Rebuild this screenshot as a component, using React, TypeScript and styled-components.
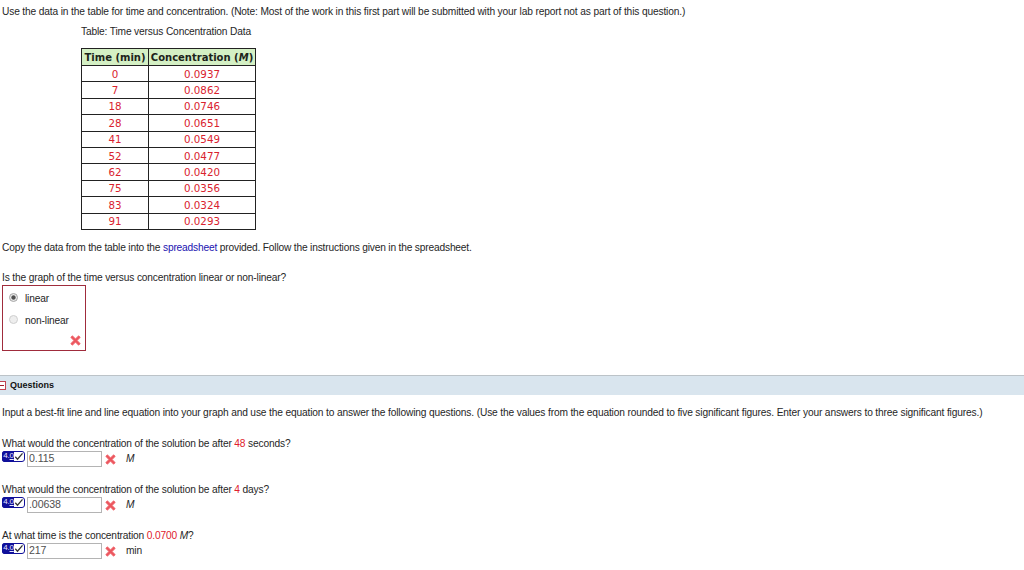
import React from "react";
import styled, { createGlobalStyle } from "styled-components";

const GlobalStyle = createGlobalStyle`
  body {
    margin: 0;
    background: #fff;
    color: #262626;
    font-family: "Liberation Sans", Arial, sans-serif;
    font-size: 10.2px;
    line-height: 16px;
    letter-spacing: -0.15px;
    overflow: hidden;
  }
`;

const Page = styled.div`
  width: 1024px;
  height: 570px;
  padding-top: 4px;
  box-sizing: border-box;
  overflow: hidden;
`;

const Text = styled.p<{ $top?: number; $spacing?: number }>`
  margin: ${(props) => props.$top || 0}px 0 0 2px;
  height: 14px;
  white-space: nowrap;
  letter-spacing: ${(props) => props.$spacing || -0.155}px;
`;

const Random = styled.span`
  color: #e0202c;
`;

const Link = styled.a`
  color: #1a12b0;
`;

const DataBlock = styled.div`
  margin: 6px 0 0 81px;
`;

const Caption = styled.div`
  height: 14px;
  margin-bottom: 10px;
  white-space: nowrap;
`;

const DataGrid = styled.div`
  display: grid;
  grid-template-columns: 66px 106px;
  grid-template-rows: 16px repeat(10, 15.4px);
  gap: 1px;
  width: 173px;
  padding: 1px;
  background: #222;
  font-family: "DejaVu Sans", Verdana, sans-serif;
  line-height: 14px;
  letter-spacing: 0;
`;

const HeadCell = styled.div`
  display: flex;
  align-items: center;
  justify-content: center;
  padding-top: 1px;
  background: #d4f0c4;
  color: #1c241a;
  font-size: 10px;
  font-weight: bold;
  white-space: pre;
`;

const Cell = styled.div`
  display: flex;
  align-items: center;
  justify-content: center;
  background: #fff;
  color: #d9222e;
  font-size: 10.3px;
`;

const ChoiceBox = styled.div`
  display: flex;
  flex-direction: column;
  box-sizing: border-box;
  width: 84px;
  height: 66px;
  margin: 1px 0 0 2px;
  padding: 5px 4px 4px 6px;
  border: 1px solid #a02c3c;
`;

const Choice = styled.label`
  display: flex;
  height: 14px;
  margin-bottom: 8px;
`;

const Radio = styled.span<{ $checked?: boolean }>`
  box-sizing: border-box;
  width: 9px;
  height: 9px;
  margin: 2px 7px 0 0;
  border: 1px solid ${(props) => (props.$checked ? "#a4a4a4" : "#cfcfcf")};
  border-radius: 50%;
  background: ${(props) =>
    props.$checked ? "radial-gradient(circle, #505050 0 1.7px, #e8e8e8 2.6px)" : "#eee"};
`;

const ChoiceMark = styled.div`
  display: flex;
  justify-content: flex-end;
`;

const SectionBar = styled.div`
  display: flex;
  align-items: center;
  box-sizing: border-box;
  height: 20px;
  margin-top: 24px;
  border-top: 1px solid #bcc3c8;
  background: #d9e5ee;
  color: #111;
  font-size: 9px;
  font-weight: bold;
  line-height: 14px;
  letter-spacing: 0;
`;

const Collapse = styled.span`
  display: flex;
  align-items: center;
  justify-content: center;
  box-sizing: border-box;
  width: 8px;
  height: 9px;
  margin: 0 4px 0 -2px;
  border: 1px solid #c04452;
  background: #fff;

  &::after {
    content: "";
    width: 4px;
    height: 1px;
    background: #a01c2c;
  }
`;

const AnswerRow = styled.div`
  display: flex;
  height: 17px;
  padding-left: 2px;
`;

const Sigfig = styled.span`
  display: flex;
  box-sizing: border-box;
  width: 23px;
  height: 11px;
  margin: 1px 2px 0 0;
  border: 1px solid #10109a;
  border-radius: 2px 3px 3px 2px;
  background: #fff;
`;

const SigfigDigits = styled.span`
  flex: none;
  width: 11px;
  background: #10109a;
  color: #e8e8ff;
  font-size: 8px;
  line-height: 8px;
  letter-spacing: -0.2px;
  text-align: center;
  white-space: nowrap;
`;

const AnswerField = styled.input`
  box-sizing: border-box;
  width: 75px;
  height: 16px;
  margin: 1px 0 0;
  padding: 0 1px 2px;
  border: 1px solid #b4b4b4;
  background: #fff;
  color: #505050;
  font: 10.6px "Liberation Sans", Arial, sans-serif;
  letter-spacing: -0.1px;
  outline: none;
`;

const AnswerMark = styled.span`
  display: flex;
  margin: 4px 10px 0 3px;
`;

const Unit = styled.span`
  padding-top: 1px;
`;

const Wrong = () => (
  <svg width="11" height="11" viewBox="0 0 11 11">
    <path d="M1.4 1.4 9.6 9.6M9.6 1.4 1.4 9.6" stroke="#f47c82" strokeWidth="3.2" />
    <path d="M1.5 1.5 9.5 9.5M9.5 1.5 1.5 9.5" stroke="#ea545c" strokeWidth="1.7" />
  </svg>
);

const Check = () => (
  <svg width="10" height="9" viewBox="0 0 10 9">
    <path d="M1.3 4.8 3.5 7.2 8.5 1.3" fill="none" stroke="#333" strokeWidth="1.3" />
  </svg>
);

const rows = [
  ["0", "0.0937"],
  ["7", "0.0862"],
  ["18", "0.0746"],
  ["28", "0.0651"],
  ["41", "0.0549"],
  ["52", "0.0477"],
  ["62", "0.0420"],
  ["75", "0.0356"],
  ["83", "0.0324"],
  ["91", "0.0293"],
];

const Answer = ({ value, children }: { value: string; children: React.ReactNode }) => (
  <AnswerRow>
    <Sigfig>
      <SigfigDigits>
        4.<u>0</u>
      </SigfigDigits>
      <Check />
    </Sigfig>
    <AnswerField defaultValue={value} />
    <AnswerMark>
      <Wrong />
    </AnswerMark>
    <Unit>{children}</Unit>
  </AnswerRow>
);

export default function App() {
  return (
    <Page>
      <GlobalStyle />
      <Text $spacing={-0.145}>
        Use the data in the table for time and concentration. (Note: Most of the work in this first
        part will be submitted with your lab report not as part of this question.)
      </Text>
      <DataBlock>
        <Caption>Table: Time versus Concentration Data</Caption>
        <DataGrid>
          <HeadCell>Time (min)</HeadCell>
          <HeadCell>
            Concentration (<i>M</i>)
          </HeadCell>
          {rows.map(([time, concentration]) => (
            <React.Fragment key={time}>
              <Cell>{time}</Cell>
              <Cell>{concentration}</Cell>
            </React.Fragment>
          ))}
        </DataGrid>
      </DataBlock>
      <Text $top={10} $spacing={-0.175}>
        Copy the data from the table into the <Link>spreadsheet</Link> provided. Follow the
        instructions given in the spreadsheet.
      </Text>
      <Text $top={16}>Is the graph of the time versus concentration linear or non-linear?</Text>
      <ChoiceBox>
        <Choice>
          <Radio $checked />
          linear
        </Choice>
        <Choice>
          <Radio />
          non-linear
        </Choice>
        <ChoiceMark>
          <Wrong />
        </ChoiceMark>
      </ChoiceBox>
      <SectionBar>
        <Collapse />
        Questions
      </SectionBar>
      <Text $top={10} $spacing={-0.146}>
        Input a best-fit line and line equation into your graph and use the equation to answer the
        following questions. (Use the values from the equation rounded to five significant figures.
        Enter your answers to three significant figures.)
      </Text>
      <Text $top={17}>
        What would the concentration of the solution be after <Random>48</Random> seconds?
      </Text>
      <Answer value="0.115">
        <i>M</i>
      </Answer>
      <Text $top={15}>
        What would the concentration of the solution be after <Random>4</Random> days?
      </Text>
      <Answer value=".00638">
        <i>M</i>
      </Answer>
      <Text $top={15}>
        At what time is the concentration <Random>0.0700</Random> <i>M</i>?
      </Text>
      <Answer value="217">min</Answer>
    </Page>
  );
}
